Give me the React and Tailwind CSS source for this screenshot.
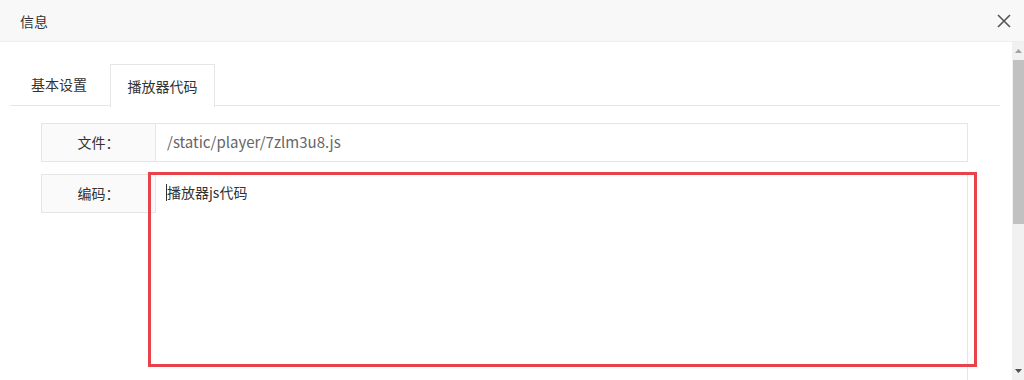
export default function App() {
  const font = { fontFamily: '"Noto Sans CJK SC", "Noto Sans", sans-serif' };
  return (
    <div className="w-[1024px] h-[380px] overflow-hidden bg-white flex flex-col text-[14px] text-[#333]" style={font}>
      {/* header */}
      <div className="h-[42px] shrink-0 bg-[#f8f8f8] border-b border-[#eeeeee] flex items-center justify-between pl-[20px] pr-[13px]">
        <span className="text-[14px] text-[#333] leading-none">信息</span>
        <svg width="14" height="14" viewBox="0 0 14 14" className="text-[#555]">
          <path d="M1 1 L13 13 M13 1 L1 13" stroke="currentColor" strokeWidth="1.6" fill="none" />
        </svg>
      </div>
      <div className="flex flex-1 min-h-0">
        {/* content */}
        <div className="flex-1 pl-[10px] pr-[12px] pt-[22px] relative">
          {/* tabs */}
          <div className="flex h-[42px] border-b border-[#e6e6e6]">
            <div className="w-[100px] flex items-center justify-center text-[#333] pr-[2px]">基本设置</div>
            <div className="w-[105px] flex items-center justify-center bg-white border border-b-0 border-[#e6e6e6] -mb-px h-[43px] text-[#333]">播放器代码</div>
          </div>
          {/* form */}
          <div className="pl-[31px] pr-[32px] pt-[17px] flex flex-col gap-[12px]">
            <div className="flex h-[39px]">
              <div className="w-[115px] shrink-0 bg-[#fafafa] border border-[#e6e6e6] flex items-center justify-center text-[#333]">文件：</div>
              <div className="flex-1 border border-l-0 border-[#e6e6e6] flex items-center pl-[11px] text-[15px] text-[#666]">/static/player/7zlm3u8.js</div>
            </div>
            <div className="flex">
              <div className="w-[115px] h-[39px] shrink-0 bg-[#fafafa] border border-[#e6e6e6] flex items-center justify-center text-[#333]">编码：</div>
              <div className="flex-1 h-[220px] border border-l-0 border-[#e6e6e6] pl-[11px] pt-[8px]">
                <div className="flex items-center h-[18px]">
                  <span className="w-px h-[17px] bg-[#333] -ml-px" />
                  <span className="text-[14px] text-[#333]">播放器js代码</span>
                </div>
              </div>
            </div>
          </div>
          {/* annotation overlay */}
          <div className="absolute left-[148px] top-[130px] w-[829px] h-[195px] border-[3px] border-[#e8434a] pointer-events-none" />
        </div>
        {/* scrollbar */}
        <div className="w-[12px] shrink-0 bg-[#f1f1f1] flex flex-col items-center">
          <div className="h-[18px] flex items-center justify-center">
            <svg width="7" height="4" viewBox="0 0 7 4"><path d="M3.5 0 L7 4 L0 4 Z" fill="#a3a3a3" /></svg>
          </div>
          <div className="w-[11px] h-[164px] bg-[#c1c1c1] ml-px" />
          <div className="flex-1" />
          <div className="h-[18px] flex items-center justify-center">
            <svg width="7" height="4" viewBox="0 0 7 4"><path d="M0 0 L7 0 L3.5 4 Z" fill="#505050" /></svg>
          </div>
        </div>
      </div>
    </div>
  );
}
